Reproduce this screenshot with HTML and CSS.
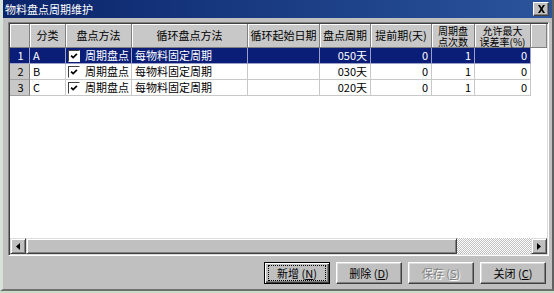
FILE: index.html
```html
<!DOCTYPE html>
<html lang="zh-CN">
<head>
    <meta charset="UTF-8">
    <title>物料盘点周期维护</title>
    <link rel="stylesheet" href="styles.css">
</head>
<body>
    <div class="window">
        <div class="titlebar">
            <span class="title">物料盘点周期维护</span>
            <span class="close-btn">
                <svg width="9" height="8" viewBox="0 0 9 8"><path d="M1 0h2l1.5 2.5L6 0h2L5.5 4 8 8H6L4.5 5.5 3 8H1l2.5-4z" fill="#000"/></svg>
            </span>
        </div>
        <div class="content">
            <div class="grid-box">
                <div class="grid-view">
                    <div class="table">
                        <div class="hd"></div>
                        <div class="hd">分类</div>
                        <div class="hd">盘点方法</div>
                        <div class="hd">循环盘点方法</div>
                        <div class="hd">循环起始日期</div>
                        <div class="hd">盘点周期</div>
                        <div class="hd">提前期(天)</div>
                        <div class="hd two"><span class="ln">周期盘</span><span class="ln">点次数</span></div>
                        <div class="hd two"><span class="ln">允许最大</span><span class="ln">误差率(%)</span></div>
                        <div class="hd"></div>

                        <div class="rn sel">1</div>
                        <div class="cell sel">A</div>
                        <div class="cell sel"><span class="chk"><svg width="12" height="12" viewBox="0 0 12 12"><path d="M2.5 5.5l2.5 2.5 4.5-4.5" stroke="#000" stroke-width="2" fill="none"/></svg></span>周期盘点</div>
                        <div class="cell sel">每物料固定周期</div>
                        <div class="cell sel"></div>
                        <div class="cell sel num">050天</div>
                        <div class="cell sel num">0</div>
                        <div class="cell sel num">1</div>
                        <div class="cell sel num">0</div>
                        <div class="fill"></div>

                        <div class="rn">2</div>
                        <div class="cell">B</div>
                        <div class="cell"><span class="chk"><svg width="12" height="12" viewBox="0 0 12 12"><path d="M2.5 5.5l2.5 2.5 4.5-4.5" stroke="#000" stroke-width="2" fill="none"/></svg></span>周期盘点</div>
                        <div class="cell">每物料固定周期</div>
                        <div class="cell"></div>
                        <div class="cell num">030天</div>
                        <div class="cell num">0</div>
                        <div class="cell num">1</div>
                        <div class="cell num">0</div>
                        <div class="fill"></div>

                        <div class="rn">3</div>
                        <div class="cell">C</div>
                        <div class="cell"><span class="chk"><svg width="12" height="12" viewBox="0 0 12 12"><path d="M2.5 5.5l2.5 2.5 4.5-4.5" stroke="#000" stroke-width="2" fill="none"/></svg></span>周期盘点</div>
                        <div class="cell">每物料固定周期</div>
                        <div class="cell"></div>
                        <div class="cell num">020天</div>
                        <div class="cell num">0</div>
                        <div class="cell num">1</div>
                        <div class="cell num">0</div>
                        <div class="fill"></div>
                    </div>
                </div>
                <div class="hscroll">
                    <div class="sb-btn"><svg width="4" height="7" viewBox="0 0 4 7"><path d="M4 0v7L0 3.5z" fill="#000"/></svg></div>
                    <div class="sb-thumb"></div>
                    <div class="sb-track"></div>
                    <div class="sb-btn"><svg width="4" height="7" viewBox="0 0 4 7"><path d="M0 0v7l4-3.5z" fill="#000"/></svg></div>
                </div>
            </div>
            <div class="buttons">
                <button class="btn default"><span class="focus">新增 (<u>N</u>)</span></button>
                <button class="btn">删除 (<u>D</u>)</button>
                <button class="btn disabled">保存 (<u>S</u>)</button>
                <button class="btn">关闭 (<u>C</u>)</button>
            </div>
        </div>
    </div>
</body>
</html>
```

FILE: styles.css
```css
body {
    margin: 0;
    background: #c8dcc8;
    font-family: "Noto Sans CJK SC", "DejaVu Sans", sans-serif;
    font-size: 11px;
}
.window {
    width: 554px;
    height: 291px;
    box-sizing: border-box;
    background: #c0c0c0;
    border-left: 3px solid #d8e2d8;
    border-right: 2px solid #606060;
    border-bottom: 2px solid #707070;
    display: flex;
    flex-direction: column;
}
.titlebar {
    height: 18px;
    background: linear-gradient(to right, #0a246a, #2a549c);
    display: flex;
    align-items: center;
    justify-content: space-between;
    padding: 0 3px 0 2px;
}
.title {
    color: #fff;
    font-size: 11px;
    line-height: 18px;
}
.close-btn {
    width: 14px;
    height: 12px;
    background: #c0c0c0;
    border: 1px solid;
    border-color: #fff #404040 #404040 #fff;
    box-shadow: inset -1px -1px #808080;
    display: flex;
    align-items: center;
    justify-content: center;
}
.content {
    flex: 1;
    padding: 4px 3px 0 5px;
    display: flex;
    flex-direction: column;
}
.grid-box {
    height: 234px;
    box-sizing: border-box;
    border: 1px solid;
    border-color: #808080 #fff #fff #808080;
    box-shadow: inset 1px 1px #404040, inset -1px -1px #dcdcdc;
    padding: 1px;
    display: flex;
    flex-direction: column;
}
.grid-view {
    flex: 1;
    background: #fff;
    overflow: hidden;
}
.table {
    display: grid;
    grid-template-columns: 20px 36px 66px 116px 72px 51px 61px 43px 56px 1fr;
    grid-template-rows: 24px repeat(3, 16px);
}
.hd {
    background: #c8c8c8;
    border-right: 1px solid #808080;
    border-bottom: 1px solid #808080;
    box-shadow: inset 1px 1px #fff;
    display: flex;
    align-items: center;
    justify-content: center;
    text-align: center;
    line-height: 13px;
    white-space: nowrap;
}
.hd.two {
    flex-direction: column;
    font-size: 10px;
}
.ln {
    display: block;
    height: 11px;
    line-height: 11px;
}
.rn {
    background: #c8c8c8;
    border-right: 1px solid #808080;
    border-bottom: 1px solid #a0a0a0;
    text-align: center;
    padding-left: 2px;
    line-height: 15px;
}
.cell {
    border-right: 1px solid #c8c8c8;
    border-bottom: 1px solid #c8c8c8;
    padding: 0 3px;
    line-height: 15px;
    white-space: nowrap;
    overflow: hidden;
    display: flex;
    align-items: center;
}
.num {
    justify-content: flex-end;
}
.sel {
    background: #0a1e78;
    color: #fff;
    border-right-color: #9aa0c8;
    border-bottom-color: #9aa0c8;
}
.fill {
    background: #fff;
}
.chk {
    width: 12px;
    height: 12px;
    box-sizing: border-box;
    background: #fff;
    border: 1px solid;
    border-color: #404040 #fff #fff #404040;
    margin: 0 5px 0 -1px;
    display: flex;
    align-items: center;
    justify-content: center;
}
.chk svg {
    width: 10px;
    height: 10px;
}
.hscroll {
    height: 16px;
    display: flex;
}
.sb-btn {
    width: 16px;
    height: 16px;
    box-sizing: border-box;
    background: #c0c0c0;
    border: 1px solid;
    border-color: #dcdcdc #404040 #404040 #dcdcdc;
    box-shadow: inset 1px 1px #fff, inset -1px -1px #808080;
    display: flex;
    align-items: center;
    justify-content: center;
}
.sb-thumb {
    width: 431px;
    box-sizing: border-box;
    background: #c0c0c0;
    border: 1px solid;
    border-color: #dcdcdc #404040 #404040 #dcdcdc;
    box-shadow: inset 1px 1px #fff, inset -1px -1px #808080;
}
.sb-track {
    flex: 1;
    background-color: #c0c0c0;
    background-image: repeating-conic-gradient(#fff 0 25%, #c0c0c0 0 50%);
    background-size: 2px 2px;
}
.buttons {
    display: flex;
    justify-content: flex-end;
    gap: 6px;
    margin-top: 6px;
    padding-right: 3px;
}
.btn {
    width: 66px;
    height: 22px;
    box-sizing: border-box;
    background: #c0c0c0;
    border: 1px solid;
    border-color: #fff #404040 #404040 #fff;
    box-shadow: inset -1px -1px #808080, inset 1px 1px #dcdcdc;
    font-family: inherit;
    font-size: 11px;
    color: #000;
    padding: 0;
    display: flex;
    align-items: center;
    justify-content: center;
}
.btn.default {
    border: 1px solid #000;
    box-shadow: inset 1px 1px #fff, inset -1px -1px #404040, inset -2px -2px #808080;
}
.focus {
    width: 56px;
    height: 14px;
    border: 1px dotted #000;
    display: flex;
    align-items: center;
    justify-content: center;
}
.btn.disabled {
    color: #808080;
    text-shadow: 1px 1px #fff;
}
```
